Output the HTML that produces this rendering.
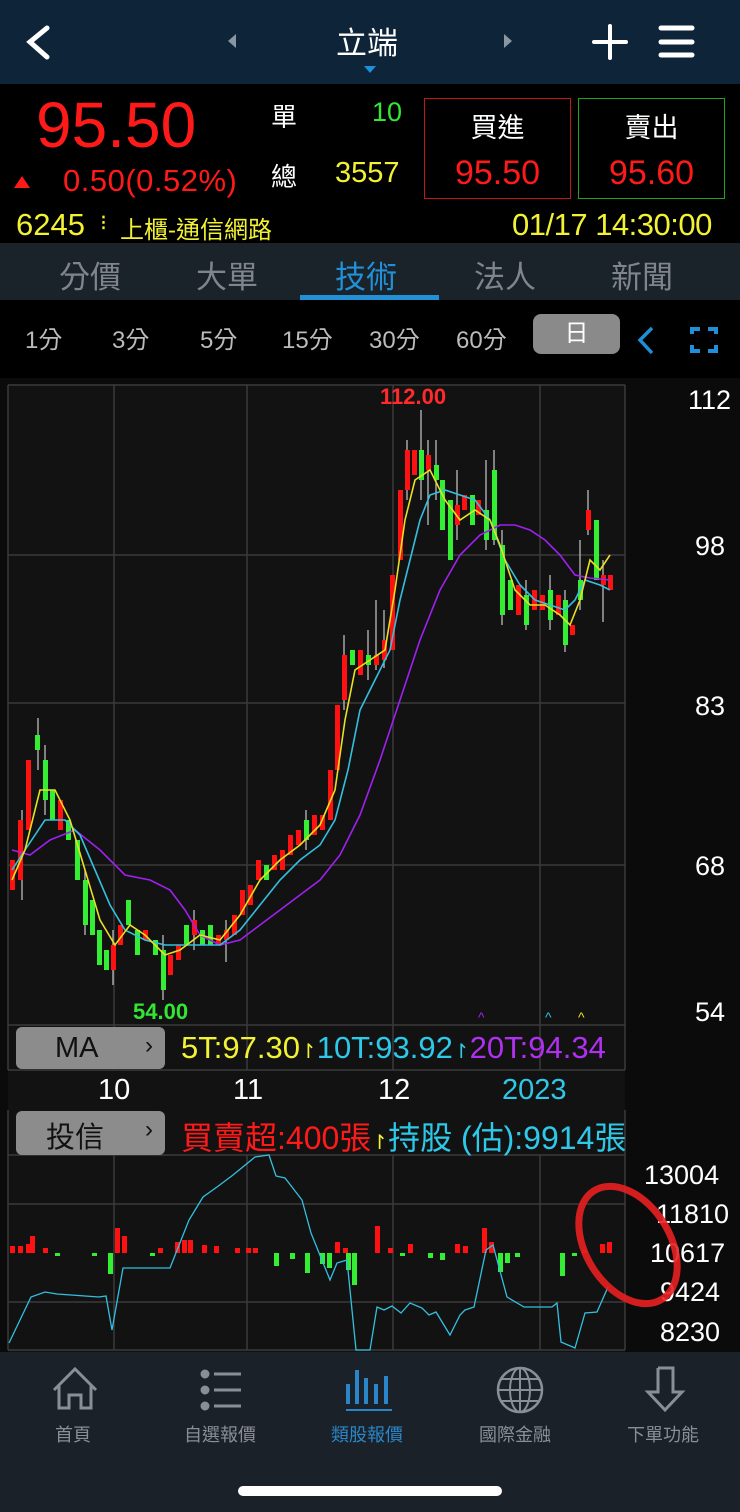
<!DOCTYPE html>
<html><head><meta charset="utf-8"><style>
*{margin:0;padding:0;box-sizing:border-box}
body{width:740px;height:1512px;background:#000;font-family:"Liberation Sans","Noto Sans CJK TC",sans-serif;position:relative;overflow:hidden;color:#fff}
.a{position:absolute;white-space:nowrap}
</style></head><body>
<div class="a" style="left:0;top:0;width:740px;height:84px;background:#0e2438"></div>
<svg class="a" style="left:0;top:0" width="740" height="84">
<polyline points="47,28 30,42 47,57" fill="none" stroke="#fff" stroke-width="5" stroke-linecap="round"/>
<polygon points="236,34 236,48 228,41" fill="#8a96a3"/>
<polygon points="504,34 504,48 512,41" fill="#8a96a3"/>
<polygon points="364,66 376,66 370,73" fill="#1e8fd8"/>
<line x1="610" y1="26" x2="610" y2="58" stroke="#fff" stroke-width="4" stroke-linecap="round"/>
<line x1="594" y1="42" x2="626" y2="42" stroke="#fff" stroke-width="4" stroke-linecap="round"/>
<g stroke="#fff" stroke-width="5" stroke-linecap="round"><line x1="661" y1="28" x2="692" y2="28"/><line x1="661" y1="42" x2="692" y2="42"/><line x1="661" y1="55" x2="692" y2="55"/></g>
</svg>
<div class="a" style="left:336px;top:18px;font-size:31px">立端</div>

<div class="a" style="left:36px;top:88px;font-size:64px;color:#ff1a1a;letter-spacing:0px">95.50</div>
<svg class="a" style="left:12px;top:174px" width="20" height="16"><polygon points="10,2 18,14 2,14" fill="#ff1a1a"/></svg>
<div class="a" style="left:63px;top:163px;font-size:31px;color:#ff1a1a;letter-spacing:0.5px">0.50(0.52%)</div>
<div class="a" style="left:271px;top:97px;font-size:26px">單</div>
<div class="a" style="left:372px;top:97px;font-size:27px;color:#33e633">10</div>
<div class="a" style="left:271px;top:157px;font-size:26px">總</div>
<div class="a" style="left:335px;top:157px;font-size:29px;color:#f2f233">3557</div>
<div class="a" style="left:424px;top:98px;width:147px;height:101px;border:1px solid #c01818"></div>
<div class="a" style="left:424px;top:106px;width:147px;text-align:center;font-size:27px">買進</div>
<div class="a" style="left:424px;top:154px;width:147px;text-align:center;font-size:34px;color:#ff1a1a">95.50</div>
<div class="a" style="left:578px;top:98px;width:147px;height:101px;border:1px solid #1fa31f"></div>
<div class="a" style="left:578px;top:106px;width:147px;text-align:center;font-size:27px">賣出</div>
<div class="a" style="left:578px;top:154px;width:147px;text-align:center;font-size:34px;color:#ff1a1a">95.60</div>
<div class="a" style="left:16px;top:207px;font-size:31px;color:#f2f233">6245</div>
<div class="a" style="left:100px;top:210px;font-size:22px;color:#f2f233">⁝</div>
<div class="a" style="left:120px;top:210px;font-size:24px;color:#f2f233">上櫃-通信網路</div>
<div class="a" style="left:512px;top:207px;font-size:31px;color:#f2f233;letter-spacing:-0.5px">01/17 14:30:00</div>

<div class="a" style="left:0;top:243px;width:740px;height:57px;background:#1a222a"></div>
<div class="a" style="left:59px;top:252px;font-size:31px;color:#7f858b">分價</div>
<div class="a" style="left:196px;top:252px;font-size:31px;color:#7f858b">大單</div>
<div class="a" style="left:335px;top:252px;font-size:31px;color:#2290d6">技術</div>
<div class="a" style="left:474px;top:252px;font-size:31px;color:#7f858b">法人</div>
<div class="a" style="left:611px;top:252px;font-size:31px;color:#7f858b">新聞</div>
<div class="a" style="left:300px;top:295px;width:139px;height:5px;background:#2290d6"></div>

<div class="a" style="left:25px;top:320px;font-size:24px;color:#bbb">1分</div>
<div class="a" style="left:112px;top:320px;font-size:24px;color:#bbb">3分</div>
<div class="a" style="left:200px;top:320px;font-size:24px;color:#bbb">5分</div>
<div class="a" style="left:282px;top:320px;font-size:24px;color:#bbb">15分</div>
<div class="a" style="left:369px;top:320px;font-size:24px;color:#bbb">30分</div>
<div class="a" style="left:456px;top:320px;font-size:24px;color:#bbb">60分</div>
<div class="a" style="left:533px;top:314px;width:87px;height:40px;border-radius:8px;background:#8a8a8a;text-align:center;font-size:24px;line-height:40px">日</div>
<svg class="a" style="left:630px;top:320px" width="110" height="40">
<polyline points="22,8 10,20 22,33" fill="none" stroke="#1e8fd8" stroke-width="3.5"/>
<g fill="none" stroke="#1e8fd8" stroke-width="4"><polyline points="62,14 62,9 70,9"/><polyline points="78,9 86,9 86,14"/><polyline points="62,25 62,31 70,31"/><polyline points="78,31 86,31 86,25"/></g>
</svg>

<div class="a" style="left:0;top:378px;width:740px;height:974px;background:#0b0b0b"></div>
<div class="a" style="left:8px;top:384px;width:617px;height:968px;background:#121212"></div>
<svg class="a" style="left:0;top:0" width="740" height="1360">
<g stroke="#3a3a3a" stroke-width="1.5" fill="none">
<line x1="8" y1="385" x2="625" y2="385"/><line x1="8" y1="555" x2="625" y2="555"/><line x1="8" y1="703" x2="625" y2="703"/><line x1="8" y1="865" x2="625" y2="865"/><line x1="8" y1="1025" x2="625" y2="1025"/>
<line x1="8" y1="385" x2="8" y2="1070"/><line x1="625" y1="385" x2="625" y2="1070"/>
<line x1="114" y1="385" x2="114" y2="1070"/><line x1="247" y1="385" x2="247" y2="1070"/><line x1="393" y1="385" x2="393" y2="1070"/><line x1="540" y1="385" x2="540" y2="1070"/>
<line x1="8" y1="1070" x2="625" y2="1070"/>
<line x1="8" y1="1155" x2="625" y2="1155"/><line x1="8" y1="1204" x2="625" y2="1204"/><line x1="8" y1="1302" x2="625" y2="1302"/><line x1="8" y1="1350" x2="625" y2="1350"/>
<line x1="8" y1="1110" x2="8" y2="1350"/><line x1="114" y1="1155" x2="114" y2="1350"/><line x1="247" y1="1155" x2="247" y2="1350"/><line x1="393" y1="1155" x2="393" y2="1350"/><line x1="540" y1="1155" x2="540" y2="1350"/><line x1="625" y1="1110" x2="625" y2="1350"/>
</g>
<g stroke="#bbb" stroke-width="1.3">
<line x1="22" y1="810" x2="22" y2="900"/><line x1="38" y1="718" x2="38" y2="770"/><line x1="45" y1="745" x2="45" y2="815"/><line x1="85" y1="870" x2="85" y2="935"/><line x1="113" y1="930" x2="113" y2="985"/><line x1="163" y1="935" x2="163" y2="1000"/><line x1="194" y1="910" x2="194" y2="950"/><line x1="226" y1="920" x2="226" y2="962"/><line x1="306" y1="810" x2="306" y2="850"/><line x1="344" y1="635" x2="344" y2="710"/><line x1="368" y1="630" x2="368" y2="680"/><line x1="376" y1="600" x2="376" y2="670"/><line x1="384" y1="610" x2="384" y2="668"/><line x1="407" y1="440" x2="407" y2="500"/><line x1="421" y1="410" x2="421" y2="500"/><line x1="428" y1="440" x2="428" y2="525"/><line x1="436" y1="440" x2="436" y2="500"/><line x1="457" y1="470" x2="457" y2="540"/><line x1="486" y1="460" x2="486" y2="550"/><line x1="494" y1="450" x2="494" y2="545"/><line x1="502" y1="530" x2="502" y2="625"/><line x1="526" y1="580" x2="526" y2="630"/><line x1="550" y1="575" x2="550" y2="630"/><line x1="565" y1="590" x2="565" y2="652"/><line x1="580" y1="540" x2="580" y2="610"/><line x1="588" y1="490" x2="588" y2="535"/><line x1="603" y1="560" x2="603" y2="622"/>
</g>
<g>
<rect x="10" y="860" width="5" height="30" fill="#f11"/><rect x="18" y="820" width="5" height="60" fill="#f11"/><rect x="26" y="760" width="5" height="70" fill="#f11"/><rect x="35" y="735" width="5" height="15" fill="#3e3"/><rect x="43" y="760" width="5" height="40" fill="#3e3"/><rect x="50" y="790" width="5" height="30" fill="#3e3"/><rect x="58" y="800" width="5" height="30" fill="#f11"/><rect x="66" y="820" width="5" height="20" fill="#3e3"/><rect x="75" y="840" width="5" height="40" fill="#3e3"/><rect x="83" y="880" width="5" height="45" fill="#3e3"/><rect x="90" y="900" width="5" height="35" fill="#3e3"/><rect x="97" y="930" width="5" height="35" fill="#3e3"/><rect x="104" y="950" width="5" height="20" fill="#3e3"/><rect x="111" y="945" width="5" height="25" fill="#f11"/><rect x="118" y="925" width="5" height="20" fill="#f11"/><rect x="126" y="900" width="5" height="25" fill="#3e3"/><rect x="135" y="930" width="5" height="25" fill="#3e3"/><rect x="143" y="930" width="5" height="10" fill="#f11"/><rect x="153" y="940" width="5" height="15" fill="#3e3"/><rect x="161" y="950" width="5" height="40" fill="#3e3"/><rect x="168" y="955" width="5" height="20" fill="#f11"/><rect x="176" y="945" width="5" height="15" fill="#f11"/><rect x="184" y="925" width="5" height="20" fill="#3e3"/><rect x="192" y="920" width="5" height="15" fill="#f11"/><rect x="200" y="930" width="5" height="15" fill="#3e3"/><rect x="208" y="925" width="5" height="20" fill="#3e3"/><rect x="216" y="935" width="5" height="10" fill="#f11"/><rect x="224" y="930" width="5" height="10" fill="#f11"/><rect x="232" y="915" width="5" height="20" fill="#f11"/><rect x="240" y="890" width="5" height="25" fill="#f11"/><rect x="248" y="885" width="5" height="20" fill="#f11"/><rect x="256" y="860" width="5" height="20" fill="#f11"/><rect x="264" y="865" width="5" height="15" fill="#3e3"/><rect x="272" y="855" width="5" height="15" fill="#f11"/><rect x="280" y="850" width="5" height="20" fill="#f11"/><rect x="288" y="835" width="5" height="20" fill="#f11"/><rect x="296" y="830" width="5" height="15" fill="#f11"/><rect x="304" y="820" width="5" height="20" fill="#3e3"/><rect x="312" y="815" width="5" height="20" fill="#f11"/><rect x="320" y="815" width="5" height="15" fill="#f11"/><rect x="328" y="770" width="5" height="50" fill="#f11"/><rect x="335" y="705" width="5" height="65" fill="#f11"/><rect x="342" y="655" width="5" height="45" fill="#f11"/><rect x="350" y="650" width="5" height="15" fill="#3e3"/><rect x="358" y="650" width="5" height="25" fill="#f11"/><rect x="366" y="655" width="5" height="10" fill="#3e3"/><rect x="374" y="655" width="5" height="10" fill="#f11"/><rect x="382" y="640" width="5" height="20" fill="#f11"/><rect x="390" y="575" width="5" height="75" fill="#f11"/><rect x="398" y="490" width="5" height="70" fill="#f11"/><rect x="405" y="450" width="5" height="40" fill="#f11"/><rect x="412" y="450" width="5" height="25" fill="#f11"/><rect x="419" y="450" width="5" height="30" fill="#3e3"/><rect x="426" y="455" width="5" height="15" fill="#f11"/><rect x="434" y="465" width="5" height="15" fill="#3e3"/><rect x="440" y="480" width="5" height="50" fill="#3e3"/><rect x="448" y="500" width="5" height="60" fill="#3e3"/><rect x="455" y="505" width="5" height="20" fill="#f11"/><rect x="462" y="495" width="5" height="15" fill="#f11"/><rect x="470" y="495" width="5" height="30" fill="#3e3"/><rect x="476" y="500" width="5" height="15" fill="#f11"/><rect x="484" y="510" width="5" height="30" fill="#3e3"/><rect x="492" y="470" width="5" height="70" fill="#3e3"/><rect x="500" y="545" width="5" height="70" fill="#3e3"/><rect x="508" y="580" width="5" height="30" fill="#3e3"/><rect x="516" y="585" width="5" height="30" fill="#f11"/><rect x="524" y="595" width="5" height="30" fill="#3e3"/><rect x="532" y="590" width="5" height="20" fill="#f11"/><rect x="540" y="595" width="5" height="15" fill="#f11"/><rect x="548" y="590" width="5" height="30" fill="#3e3"/><rect x="556" y="595" width="5" height="20" fill="#f11"/><rect x="563" y="600" width="5" height="45" fill="#3e3"/><rect x="570" y="625" width="5" height="10" fill="#f11"/><rect x="578" y="580" width="5" height="20" fill="#3e3"/><rect x="586" y="510" width="5" height="20" fill="#f11"/><rect x="594" y="520" width="5" height="60" fill="#3e3"/><rect x="601" y="575" width="5" height="10" fill="#f11"/><rect x="608" y="575" width="5" height="15" fill="#f11"/>
</g>
<polyline fill="none" stroke="#a020f0" stroke-width="1.6" points="12,850 30,855 50,840 75,830 100,850 125,875 150,880 170,890 185,910 200,935 220,945 240,940 260,925 280,910 300,895 320,880 340,855 360,815 380,760 400,700 420,640 440,590 460,555 480,535 500,525 515,525 530,530 545,540 560,555 575,575 590,578 610,580"/>
<polyline fill="none" stroke="#33c0e0" stroke-width="1.6" points="12,870 25,850 45,820 65,820 80,835 95,870 110,905 125,930 145,940 165,945 190,945 220,945 240,930 260,905 280,880 300,860 320,845 335,820 348,770 360,710 375,680 390,650 400,600 410,560 420,520 430,495 445,490 460,495 475,500 490,520 505,560 520,585 535,600 550,605 565,610 575,600 585,580 600,585 610,590"/>
<polyline fill="none" stroke="#e8e020" stroke-width="1.6" points="12,880 25,850 40,790 55,790 70,820 85,870 100,920 115,945 130,925 145,935 165,955 180,950 200,935 220,940 240,915 260,880 280,860 300,845 320,825 335,790 345,720 355,670 370,660 385,650 395,590 405,520 415,480 430,470 445,500 460,520 475,510 490,520 500,545 515,590 530,605 545,605 560,615 570,625 580,600 590,560 600,570 610,555"/>
<g fill="#f11"><rect x="10" y="1246" width="5" height="7"/><rect x="18" y="1246" width="5" height="7"/><rect x="26" y="1244" width="5" height="9"/><rect x="30" y="1236" width="5" height="17"/><rect x="43" y="1248" width="5" height="5"/><rect x="115" y="1228" width="5" height="25"/><rect x="122" y="1236" width="5" height="17"/><rect x="158" y="1248" width="5" height="5"/><rect x="175" y="1242" width="5" height="11"/><rect x="182" y="1240" width="5" height="13"/><rect x="188" y="1240" width="5" height="13"/><rect x="202" y="1245" width="5" height="8"/><rect x="214" y="1246" width="5" height="7"/><rect x="235" y="1248" width="5" height="5"/><rect x="246" y="1248" width="5" height="5"/><rect x="253" y="1248" width="5" height="5"/><rect x="335" y="1242" width="5" height="11"/><rect x="343" y="1248" width="5" height="5"/><rect x="375" y="1226" width="5" height="27"/><rect x="388" y="1248" width="5" height="5"/><rect x="408" y="1244" width="5" height="9"/><rect x="455" y="1244" width="5" height="9"/><rect x="463" y="1246" width="5" height="7"/><rect x="482" y="1228" width="5" height="25"/><rect x="489" y="1242" width="5" height="11"/><rect x="582" y="1250" width="5" height="3"/><rect x="600" y="1244" width="5" height="9"/><rect x="607" y="1242" width="5" height="11"/></g>
<g fill="#3e3"><rect x="55" y="1253" width="5" height="3"/><rect x="92" y="1253" width="5" height="3"/><rect x="108" y="1253" width="5" height="21"/><rect x="150" y="1253" width="5" height="3"/><rect x="274" y="1253" width="5" height="13"/><rect x="290" y="1253" width="5" height="6"/><rect x="305" y="1253" width="5" height="20"/><rect x="320" y="1253" width="5" height="11"/><rect x="327" y="1253" width="5" height="15"/><rect x="346" y="1253" width="5" height="17"/><rect x="352" y="1253" width="5" height="32"/><rect x="400" y="1253" width="5" height="3"/><rect x="428" y="1253" width="5" height="5"/><rect x="440" y="1253" width="5" height="7"/><rect x="498" y="1253" width="5" height="19"/><rect x="505" y="1253" width="5" height="10"/><rect x="515" y="1253" width="5" height="4"/><rect x="560" y="1253" width="5" height="23"/><rect x="572" y="1253" width="5" height="3"/></g>
<polyline fill="none" stroke="#33c0e0" stroke-width="1.3" points="9,1343 31,1297 45,1292 57,1294 99,1297 106,1296 112,1330 123,1268 170,1268 189,1220 203,1197 217,1187 233,1175 255,1157 269,1155 276,1176 285,1178 302,1200 311,1233 330,1280 337,1263 347,1260 356,1350 370,1350 377,1307 384,1310 392,1306 401,1313 410,1303 422,1308 429,1315 436,1312 450,1335 460,1315 465,1310 474,1307 486,1250 493,1245 507,1297 524,1307 552,1307 557,1303 561,1342 575,1348 585,1313 597,1312 608,1287"/>
<g fill="#a020f0" font-size="14" font-family="Liberation Sans"><text x="478" y="1022">^</text><text x="545" y="1022" fill="#33c0e0">^</text><text x="578" y="1022" fill="#e8e020">^</text></g>
</svg>
<div class="a" style="left:380px;top:384px;font-size:22px;color:#ff2a2a;font-weight:bold">112.00</div>
<div class="a" style="left:133px;top:999px;font-size:22px;color:#33e633;font-weight:bold">54.00</div>
<div class="a" style="left:688px;top:385px;font-size:27px">112</div>
<div class="a" style="left:695px;top:531px;font-size:27px">98</div>
<div class="a" style="left:695px;top:691px;font-size:27px">83</div>
<div class="a" style="left:695px;top:851px;font-size:27px">68</div>
<div class="a" style="left:695px;top:997px;font-size:27px">54</div>

<div class="a" style="left:16px;top:1027px;width:149px;height:42px;border-radius:6px;background:#8c8c8c"></div>
<div class="a" style="left:55px;top:1032px;font-size:29px;color:#111">MA</div>
<div class="a" style="left:145px;top:1032px;font-size:24px;color:#111">›</div>
<div class="a" style="left:181px;top:1030px;width:444px;overflow:hidden;font-size:31px;color:#f2f233;letter-spacing:0px">5T:97.30<span style="font-size:20px">↾</span><span style="color:#2ec8e8">10T:93.92<span style="font-size:20px">↾</span></span><span style="color:#b030f0">20T:94.34</span></div>
<div class="a" style="left:98px;top:1074px;font-size:29px">10</div>
<div class="a" style="left:233px;top:1074px;font-size:29px">11</div>
<div class="a" style="left:378px;top:1074px;font-size:29px">12</div>
<div class="a" style="left:502px;top:1074px;font-size:29px;color:#2ec8e8">2023</div>
<div class="a" style="left:16px;top:1111px;width:149px;height:44px;border-radius:6px;background:#8c8c8c"></div>
<div class="a" style="left:46px;top:1114px;font-size:29px;color:#111">投信</div>
<div class="a" style="left:145px;top:1116px;font-size:24px;color:#111">›</div>
<div class="a" style="left:181px;top:1113px;width:444px;overflow:hidden;font-size:32px;color:#ff1a1a;letter-spacing:0px">買賣超:400張<span style="color:#f2f233;font-size:20px">↾</span><span style="color:#2ec8e8">持股 (估):9914張</span></div>
<div class="a" style="left:644px;top:1160px;font-size:27px">13004</div>
<div class="a" style="left:656px;top:1199px;font-size:27px">11810</div>
<div class="a" style="left:650px;top:1238px;font-size:27px">10617</div>
<div class="a" style="left:660px;top:1277px;font-size:27px">9424</div>
<div class="a" style="left:660px;top:1317px;font-size:27px">8230</div>
<svg class="a" style="left:560px;top:1175px" width="140" height="140"><ellipse cx="68" cy="70" rx="42" ry="64" transform="rotate(-32 68 70)" fill="none" stroke="#e82020" stroke-width="7" opacity="0.9"/></svg>

<div class="a" style="left:0;top:1352px;width:740px;height:160px;background:#1b2128"></div>
<svg class="a" style="left:0;top:1352px" width="740" height="80">
<g fill="none" stroke="#8a8f95" stroke-width="3">
<polyline points="54,38 75,17 96,38"/><polyline points="59,34 59,56 69,56 69,43 81,43 81,56 91,56 91,34"/>
<circle cx="205" cy="22" r="3" fill="#8a8f95"/><circle cx="205" cy="38" r="3" fill="#8a8f95"/><circle cx="205" cy="54" r="3" fill="#8a8f95"/>
<line x1="214" y1="22" x2="241" y2="22"/><line x1="214" y1="38" x2="241" y2="38"/><line x1="214" y1="54" x2="241" y2="54"/>
<circle cx="520" cy="38" r="22" stroke-width="2.5"/><ellipse cx="520" cy="38" rx="10" ry="22" stroke-width="2"/><line x1="498" y1="38" x2="542" y2="38" stroke-width="2"/><line x1="520" y1="16" x2="520" y2="60" stroke-width="2"/><line x1="502" y1="27" x2="538" y2="27" stroke-width="2"/><line x1="502" y1="49" x2="538" y2="49" stroke-width="2"/>
<polyline points="658,16 673,16 673,40 682,40 665,58 648,40 658,40 658,16"/>
</g>
<g stroke="#2a86c8" stroke-width="4"><line x1="348" y1="32" x2="348" y2="52"/><line x1="357" y1="18" x2="357" y2="52"/><line x1="366" y1="26" x2="366" y2="52"/><line x1="376" y1="32" x2="376" y2="52"/><line x1="386" y1="24" x2="386" y2="52"/><line x1="346" y1="58" x2="392" y2="58" stroke-width="2"/></g>
</svg>
<div class="a" style="left:55px;top:1421px;font-size:18px;color:#8a8f95">首頁</div>
<div class="a" style="left:184px;top:1421px;font-size:18px;color:#8a8f95">自選報價</div>
<div class="a" style="left:331px;top:1421px;font-size:18px;color:#2a86c8">類股報價</div>
<div class="a" style="left:479px;top:1421px;font-size:18px;color:#8a8f95">國際金融</div>
<div class="a" style="left:627px;top:1421px;font-size:18px;color:#8a8f95">下單功能</div>
<div class="a" style="left:238px;top:1486px;width:264px;height:10px;border-radius:5px;background:#fff"></div>
</body></html>
